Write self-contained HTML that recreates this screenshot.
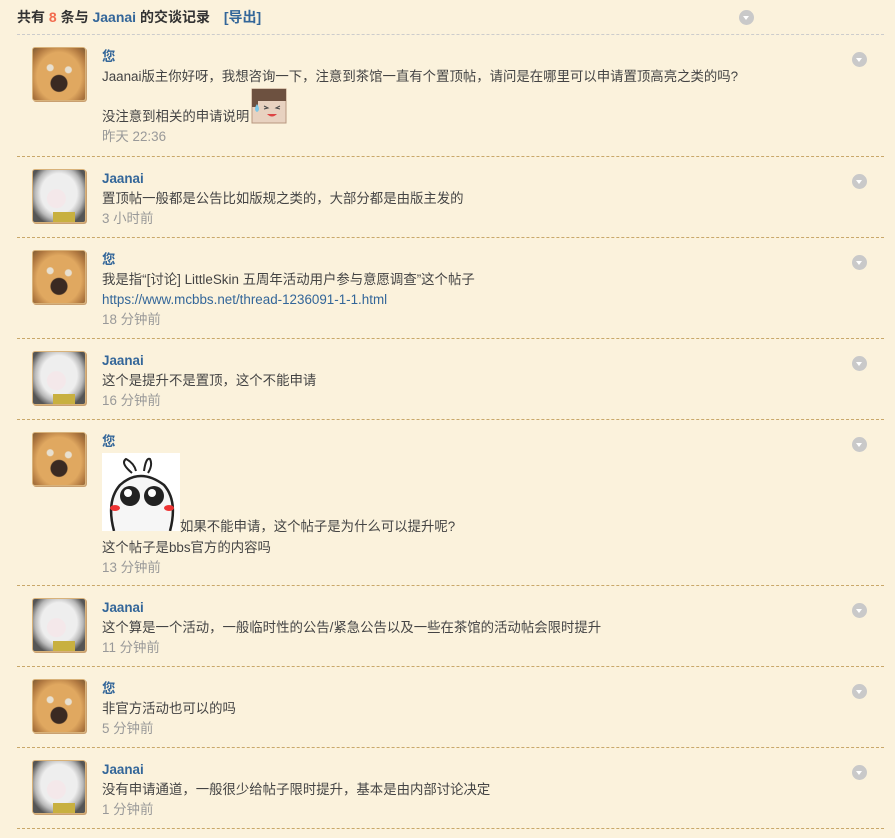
<!DOCTYPE html>
<html><head><meta charset="utf-8"><style>
html,body{margin:0;padding:0;background:#fbf2dc;}
body{width:895px;height:838px;overflow:hidden;font-family:"Liberation Sans","Noto Sans CJK SC",sans-serif;font-size:13.4px;color:#444;position:relative}
.hd{position:absolute;left:17px;top:8px;font-weight:bold;font-size:14px;line-height:18px;color:#333;white-space:nowrap}
.hd .n{color:#f26c4f}.hd .u{color:#336699}.hd .ex{color:#336699;margin-left:10px}
.hsep{position:absolute;left:17px;right:11px;top:34px;border-top:1px dashed #ccc}
.arr{position:absolute;width:15px;height:15px;border-radius:50%;background:#c9c9c9}
.arr:after{content:"";position:absolute;left:4px;top:6px;border-left:3.5px solid transparent;border-right:3.5px solid transparent;border-top:4px solid #fff}
.row{position:absolute;left:17px;width:867px;border-bottom:1px dashed #c9a86a}
.av{position:absolute;left:15px;top:12px;width:52px;height:52px;border:1px solid #d8b27a;border-radius:3px;box-shadow:1px 1px 0 #c9a070;overflow:hidden}
.dog{background:radial-gradient(circle at 50% 68%,#3a2a22 0 8px,transparent 9px),radial-gradient(circle at 33% 38%,#e8e0d0 0 3px,transparent 4px),radial-gradient(circle at 68% 42%,#e8e0d0 0 3px,transparent 4px),radial-gradient(ellipse at 50% 55%,#e0a860 0 22px,#b07840 30px,#6a5030 40px)}
.ani{background:radial-gradient(circle at 45% 55%,#f4e8ea 0 9px,transparent 10px),radial-gradient(ellipse at 50% 45%,#eeeeee 0 18px,#b8b8b8 24px,#555 30px),#888}
.ani:after{content:"";position:absolute;left:20px;bottom:0;width:22px;height:10px;background:#c8b040}
.c{position:absolute;left:85px;top:12px;line-height:20px;white-space:nowrap}
.nm{font-weight:bold;color:#336699}
.t{color:#999}
a{color:#336699;text-decoration:none}
.row .arr{left:835px;top:17px}
svg{vertical-align:bottom}
</style></head><body>
<div class="hd">共有 <span class="n">8</span> 条与 <span class="u">Jaanai</span> 的交谈记录 <span class="ex">[导出]</span></div>
<div class="arr" style="left:739px;top:10px"></div>
<div class="hsep"></div>

<div class="row" style="top:35px;height:121px"><div class="av dog"></div><div class="arr"></div>
<div class="c"><div class="nm">您</div><div>Jaanai版主你好呀，我想咨询一下，注意到茶馆一直有个置顶帖，请问是在哪里可以申请置顶高亮之类的吗?</div>
<div style="height:40px;position:relative"><span style="position:absolute;top:20px;left:0">没注意到相关的申请说明</span>
<svg style="position:absolute;left:148px;top:1px" width="37" height="37" viewBox="0 0 37 37"><rect x="2" y="1" width="34" height="34" fill="#e8d2c0" stroke="#b89880"/><rect x="2" y="1" width="34" height="12" fill="#6d5140"/><path d="M2 13h6v6H2z" fill="#6d5140"/><path d="M7 16q-4 6 0 8q4-2 0-8z" fill="#7cc8e8"/><path d="M14 18l4 2l-4 1M30 18l-4 2l4 1" stroke="#444" fill="none"/><path d="M17 26q5 5 10 0z" fill="#d44"/></svg></div>
<div class="t">昨天 22:36</div></div></div>

<div class="row" style="top:157px;height:80px"><div class="av ani"></div><div class="arr"></div>
<div class="c"><div class="nm">Jaanai</div><div>置顶帖一般都是公告比如版规之类的，大部分都是由版主发的</div><div class="t">3 小时前</div></div></div>

<div class="row" style="top:238px;height:100px"><div class="av dog"></div><div class="arr"></div>
<div class="c"><div class="nm">您</div><div>我是指“[讨论] LittleSkin 五周年活动用户参与意愿调查”这个帖子</div><div><a>https://www.mcbbs.net/thread-1236091-1-1.html</a></div><div class="t">18 分钟前</div></div></div>

<div class="row" style="top:339px;height:80px"><div class="av ani"></div><div class="arr"></div>
<div class="c"><div class="nm">Jaanai</div><div>这个是提升不是置顶，这个不能申请</div><div class="t">16 分钟前</div></div></div>

<div class="row" style="top:420px;height:165px"><div class="av dog"></div><div class="arr"></div>
<div class="c"><div class="nm">您</div>
<div style="height:86px;position:relative"><svg style="position:absolute;left:0;top:1px" width="78" height="78" viewBox="0 0 78 78"><rect width="78" height="78" fill="#fff"/><path d="M30 20q-12-10-6-14q8 4 10 12M42 18q2-14 6-12q3 6-2 14" stroke="#222" stroke-width="2" fill="none"/><path d="M12 78q-8-30 6-46q20-18 44 0q14 16 6 46" stroke="#222" stroke-width="2.5" fill="#f6f6f6"/><circle cx="28" cy="43" r="10" fill="#222"/><circle cx="52" cy="43" r="10" fill="#222"/><circle cx="26" cy="40" r="4" fill="#fff"/><circle cx="50" cy="40" r="4" fill="#fff"/><ellipse cx="13" cy="55" rx="5" ry="3" fill="#e33"/><ellipse cx="67" cy="55" rx="5" ry="3" fill="#e33"/></svg><span style="position:absolute;left:78px;top:65px;white-space:nowrap">如果不能申请，这个帖子是为什么可以提升呢?</span></div>
<div>这个帖子是bbs官方的内容吗</div><div class="t">13 分钟前</div></div></div>

<div class="row" style="top:586px;height:80px"><div class="av ani"></div><div class="arr"></div>
<div class="c"><div class="nm">Jaanai</div><div>这个算是一个活动，一般临时性的公告/紧急公告以及一些在茶馆的活动帖会限时提升</div><div class="t">11 分钟前</div></div></div>

<div class="row" style="top:667px;height:80px"><div class="av dog"></div><div class="arr"></div>
<div class="c"><div class="nm">您</div><div>非官方活动也可以的吗</div><div class="t">5 分钟前</div></div></div>

<div class="row" style="top:748px;height:80px"><div class="av ani"></div><div class="arr"></div>
<div class="c"><div class="nm">Jaanai</div><div>没有申请通道，一般很少给帖子限时提升，基本是由内部讨论决定</div><div class="t">1 分钟前</div></div></div>
</body></html>
